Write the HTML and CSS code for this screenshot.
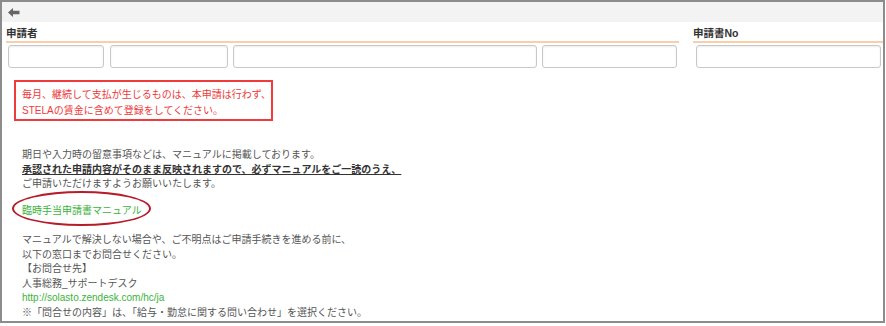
FILE: index.html
```html
<!DOCTYPE html>
<html lang="ja">
<head>
    <meta charset="UTF-8">
    <title>臨時手当申請</title>
    <link rel="stylesheet" href="styles.css">
</head>
<body>
    <div class="frame">
        <div class="toolbar">
            <svg class="back-icon" width="12" height="9" viewBox="0 0 12 9">
                <path d="M0 4.5 L5 0 L5 2.8 L11.5 2.8 L11.5 6.2 L5 6.2 L5 9 Z" fill="#666"/>
            </svg>
        </div>
        <div class="header">
            <div class="group group-applicant">
                <div class="group-label">申請者</div>
                <div class="inputs">
                    <input type="text" class="field w1">
                    <input type="text" class="field w2">
                    <input type="text" class="field w3">
                    <input type="text" class="field w4">
                </div>
            </div>
            <div class="group group-no">
                <div class="group-label">申請書No</div>
                <div class="inputs">
                    <input type="text" class="field w5">
                </div>
            </div>
        </div>
        <div class="content">
            <div class="notice">
                毎月、継続して支払が生じるものは、本申請は行わず、<br>
                STELAの賃金に含めて登録をしてください。
            </div>
            <p class="text">
                期日や入力時の留意事項などは、マニュアルに掲載しております。<br>
                <span class="strong">承認された申請内容がそのまま反映されますので、必ずマニュアルをご一読のうえ、</span><br>
                ご申請いただけますようお願いいたします。
            </p>
            <div class="manual">
                <a class="link" href="#">臨時手当申請書マニュアル</a>
                <span class="circle"></span>
            </div>
            <p class="text">
                マニュアルで解決しない場合や、ご不明点はご申請手続きを進める前に、<br>
                以下の窓口までお問合せください。<br>
                【お問合せ先】<br>
                人事総務_サポートデスク<br>
                <a class="link" href="#">http://solasto.zendesk.com/hc/ja</a><br>
                ※「問合せの内容」は、「給与・勤怠に関する問い合わせ」を選択ください。
            </p>
        </div>
    </div>
</body>
</html>
```

FILE: styles.css
```css
body {
    margin: 0;
    padding: 0;
    background-color: #fff;
    font-family: "Liberation Sans", "Noto Sans CJK JP", sans-serif;
    color: #555;
}
.frame {
    box-sizing: border-box;
    width: 885px;
    height: 323px;
    border: 2px solid #8c8c8c;
    overflow: hidden;
}
.toolbar {
    height: 20px;
    background-color: #f3f3f3;
    display: flex;
    align-items: center;
    padding-left: 6px;
}
.back-icon {
    display: block;
}
.header {
    display: flex;
    padding: 0 0 0 4px;
    gap: 14px;
}
.group-applicant {
    width: 673px;
}
.group-no {
    flex: 1;
}
.group-label {
    padding-top: 4px;
    line-height: 15px;
    height: 15px;
    font-size: 10.5px;
    font-weight: bold;
    color: #333;
    border-bottom: 2px solid #f8cfa8;
}
.inputs {
    display: flex;
    gap: 5px;
    margin-top: 2px;
    padding-left: 2px;
}
.group-no .inputs {
    padding-left: 3px;
}
.field {
    box-sizing: border-box;
    height: 23px;
    border: 1px solid #c8c8c8;
    border-radius: 3px;
    box-shadow: inset 0 1px 2px rgba(0, 0, 0, 0.08);
    background-color: #fff;
    margin: 0;
    padding: 0;
}
.w1 { width: 96px; }
.w2 { width: 118px; margin-left: 1px; }
.w3 { width: 304px; }
.w4 { width: 135px; }
.w5 { width: 185px; }
.content {
    padding: 12px 0 0 12px;
    font-size: 10px;
}
.notice {
    box-sizing: border-box;
    width: 259px;
    height: 41px;
    border: 2px solid #ef3b3b;
    padding: 5px 0 0 6px;
    line-height: 15.5px;
    color: #ee3a3a;
}
.text {
    margin: 0;
    padding-left: 8px;
    line-height: 14.5px;
}
.notice + .text {
    margin-top: 27px;
}
.strong {
    font-weight: bold;
    color: #333;
    text-decoration: underline;
}
.manual {
    position: relative;
    margin: 12px 0 15px;
    padding-left: 8px;
    line-height: 14.5px;
}
.link {
    color: #3bb33b;
    text-decoration: none;
}
.circle {
    position: absolute;
    left: -2px;
    top: -13px;
    width: 139px;
    height: 35px;
    box-sizing: border-box;
    border: 2px solid #b71c2b;
    border-radius: 50%;
}
```
